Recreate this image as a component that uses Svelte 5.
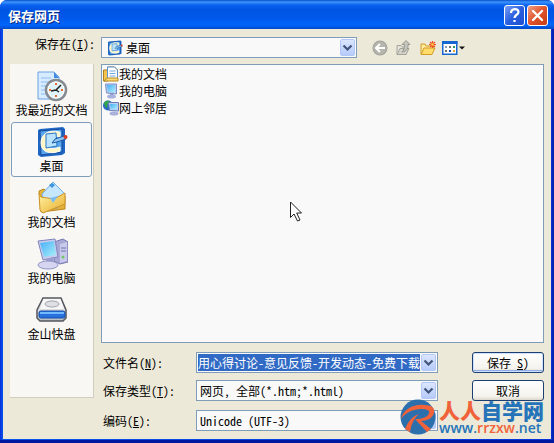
<script>
  let folder = $state('桌面');
  let fileName = $state('用心得讨论-意见反馈-开发动态-免费下载');
  let active = $state(1);
  const places = ['我最近的文档', '桌面', '我的文档', '我的电脑', '金山快盘'];
  const files = ['我的文档', '我的电脑', '网上邻居'];
</script>

{#snippet chevron()}
  <svg class="chev" viewBox="0 0 15 17" aria-hidden="true">
    <rect x=".5" y=".5" width="14" height="16" rx="1.5" fill="url(#gDrop)" stroke="#b4c8f6" />
    <path d="M3.500 6.500 7.500 10.500 11.500 6.500" fill="none" stroke="#41557c" stroke-width="2.200" />
  </svg>
{/snippet}

{#snippet deskIcon()}
  <path d="M2 4 4 3 27 1l2 2v24l-3 2-21 2-3-2Z" fill="#1e67c4" />
  <path d="M4 5 26 3v23L5 29Z" fill="#58a6ee" stroke="#174a9c" />
  <path d="M24 6C11 3 5 9 5 17c0 9 9 12 19 8v-4c-8 3-14 1-14-4 0-6 6-8 14-6Z" fill="#fff6c8" stroke="#fffdf0" />
  <path d="M10 8 20 7l1 13-11 2Z" fill="#b9e3fc" stroke="#2875c9" />
  <path d="m16 17 3-4 9-3 2 3-9 3Z" fill="#8ec6f2" stroke="#1f5aa5" />
  <circle cx="29.500" cy="11" r="2" fill="#d83c22" />
{/snippet}

{#snippet monitor()}
  <path d="m2 3 17-2 3 18-15 3Z" fill="#c9cbed" stroke="#8084bd" />
  <path d="m4 5 14-2 2 14-12 2Z" fill="url(#gScreen)" />
  <path d="m10 21 7-2 1 6-7 1Z" fill="#9a9dd0" />
  <ellipse cx="12" cy="27" rx="10" ry="4" fill="#d6d6f0" stroke="#9295c6" />
{/snippet}

<svg class="defs" aria-hidden="true">
  <defs>
    <linearGradient id="gDrop" x1="0" y1="0" x2="0" y2="1"><stop offset="0" stop-color="#dce7fe" /><stop offset="1" stop-color="#b5cafa" /></linearGradient>
    <linearGradient id="gScreen" x1="0" y1="0" x2="1" y2="1"><stop offset="0" stop-color="#49aef5" /><stop offset="1" stop-color="#a9f0fb" /></linearGradient>
    <linearGradient id="gFolder" x1="0" y1="0" x2="1" y2="1"><stop offset="0" stop-color="#fff3a5" /><stop offset="1" stop-color="#e9ad2c" /></linearGradient>
    <linearGradient id="gMetal" x1="0" y1="0" x2="0" y2="1"><stop offset="0" stop-color="#fff" /><stop offset="1" stop-color="#b9bcc4" /></linearGradient>
  </defs>
</svg>

<main class="window">
  <header>
    <h1>保存网页</h1>
    <button class="cap help" aria-label="帮助">
      <svg viewBox="0 0 19 19"><path d="M6 7c0-5 7.500-5 7.500-1 0 3-4 2.500-4 6M9.500 14v2" fill="none" stroke="#fff" stroke-width="2.200" /></svg>
    </button>
    <button class="cap close" aria-label="关闭">
      <svg viewBox="0 0 19 19"><path d="m5 5 9 9m0-9-9 9" stroke="#fff" stroke-width="2.300" stroke-linecap="round" /></svg>
    </button>
  </header>

  <div class="client">
    <div class="lookin">
      <label for="folder">保存在(<u>I</u>):</label>
      <div class="combo place">
        <svg class="small" viewBox="0 0 32 32" aria-hidden="true">{@render deskIcon()}</svg>
        <select id="folder" bind:value={folder}><option>桌面</option></select>
        {@render chevron()}
      </div>
      <div class="tools">
        <button aria-label="后退"><svg viewBox="0 0 16 16"><circle cx="8" cy="8" r="7.500" fill="#a3a29b" /><circle cx="8" cy="8" r="6.500" fill="#b5b4ad" /><path d="M13 8H4m4-4L4 8l4 4" fill="none" stroke="#fff" stroke-width="2" /></svg></button>
        <button aria-label="向上"><svg viewBox="0 0 16 16"><path d="M1 5.500h4l1 1.500h4v7.500H1Z" fill="#e4e3dc" stroke="#a5a49c" /><path d="m1 14.500 3-6h9l-3 6Z" fill="#d3d2ca" stroke="#a5a49c" /><path d="M6 4.500 10 .5l4 4h-2c.5 4-1.500 7-6 7.500 2-2 2.500-4.500 2.500-7.500Z" fill="#c4c3bc" stroke="#8b8a83" stroke-width=".8" /></svg></button>
        <button aria-label="新建文件夹"><svg viewBox="0 0 16 16"><path d="M1 14V4h4l1 2h7v3" fill="#ffeaa0" stroke="#d39c26" /><path d="M1 14.500 4 8h11l-3 6.500Z" fill="#ffdc6a" stroke="#d39c26" /><path d="M12.500 1v7M9 4.500h7M10 2l5 5m0-5-5 5" stroke="#f04b20" stroke-width="1.200" /><circle cx="12.500" cy="4.500" r="1.300" fill="#ffd04a" /></svg></button>
        <button class="view" aria-label="查看"><svg viewBox="0 0 23 16"><rect x=".75" y="1.750" width="14" height="12.500" fill="#fff" stroke="#1667cf" stroke-width="1.500" /><path d="M0 1h15.500v3H0Z" fill="#1667cf" /><path d="M3 6h2v2H3Z" fill="#8a9bb8" /><path d="M7 6h2v2H7ZM3 10h2v2H3Z" fill="#77716c" /><path d="M11 6h2v2h-2Z" fill="#2d9c57" /><path d="M7 10h2v2H7Z" fill="#193fa8" /><path d="M11 10h2v2h-2Z" fill="#e4a426" /><path d="M17 6.500h6l-3 3Z" fill="#111" /></svg></button>
      </div>
    </div>

    <div class="body">
      <nav aria-label="位置">
        {#each places as p, i}
          <button class:active={active === i} onclick={() => (active = i)}>
            <svg viewBox="0 0 32 32" aria-hidden="true">
              {#if i === 0}
                <path d="M2 2h16l5 5v22H2Z" fill="#d8ecff" stroke="#6ba2e4" />
                <path d="M18 2v6h5Z" fill="#438be0" />
                <path d="M5 8h10M5 12h12M5 16h8M5 20h7M5 24h7" stroke="#8bbcf0" />
                <circle cx="20" cy="20" r="10" fill="#dff3fb" stroke="#858b91" stroke-width="2.500" />
                <circle cx="20" cy="20" r="8" fill="none" stroke="#fff" />
                <path d="m15 21 5-1 5-5M20 20l3 2" fill="none" stroke="#222" stroke-width="1.500" />
                <path d="M20 13v2M20 25v2M13 20h2M25 20h2" stroke="#ef6b31" stroke-width="2" />
              {:else if i === 1}
                {@render deskIcon()}
              {:else if i === 2}
                <path d="M3 9 8 7l3 3 18 4v13L5 30Z" fill="#e5b13b" stroke="#bd861c" />
                <path d="m6 12 11-12 12 12-8 14H9Z" fill="#c5e6fc" stroke="#72aee2" />
                <path d="m13 3 3-2 3 2-3 3Z" fill="#3f95df" />
                <path d="M3 11 5 15 18 17l11-6v11L7 31 4 28Z" fill="url(#gFolder)" stroke="#cc942a" />
                <path d="m14 16 8-2-5 7Z" fill="#79bdf1" />
              {:else if i === 3}
                <path d="m18 4 9-3 5 3v20l-8 2-6-3Z" fill="#a7a8d5" stroke="#777ab1" />
                <path d="m24 6 7-2v19l-7 2Z" fill="#c9caeb" />
                <path d="M25 10h5M25 13h5" stroke="#7074ae" /><circle cx="27" cy="19" r="1.500" fill="#73c661" />
                {@render monitor()}
              {:else}
                <path d="M7 4h18l5 12v8l-3 3H4l-3-3v-8Z" fill="url(#gMetal)" stroke="#54575d" stroke-width="1.500" />
                <path d="M8 5h16l4 10H4Z" fill="#f7f7f8" />
                <ellipse cx="16" cy="10" rx="7" ry="3" fill="#dfe0e3" stroke="#a2a4aa" />
                <rect x="3" y="17" width="26" height="7" rx="2" fill="#2871dc" stroke="#144fac" />
                <path d="M4 18h24v2H4Z" fill="#72baff" />
              {/if}
            </svg>
            <span>{p}</span>
          </button>
        {/each}
      </nav>

      <div class="right">
        <ul>
          {#each files as f, i}
            <li>
              <svg viewBox="0 0 32 32" aria-hidden="true">
                {#if i === 0}
                  <path d="M1 8h8V2h14l6 6v16H9v6H1Z" fill="#f3c550" stroke="#ae7d1b" stroke-width="2" />
                  <path d="M9 2h14l6 6v18H9Z" fill="#fff" stroke="#5c91cf" stroke-width="2" />
                  <path d="M13 10h12M13 15h12M13 20h12" stroke="#71a7df" stroke-width="2" />
                  <path d="m2 30 7-6h21v6Z" fill="#ffdc73" stroke="#b78825" stroke-width="2" />
                {:else if i === 1}
                  <path d="M5 2h22v20L7 20Z" fill="#b9c7ec" stroke="#7c91c9" stroke-width="2" />
                  <path d="M8 4h16v15L10 17Z" fill="url(#gScreen)" />
                  <path d="M14 20h7v6h-7Z" fill="#8590c5" /><ellipse cx="17" cy="27" rx="9" ry="4" fill="#a8b1dd" />
                {:else}
                  <circle cx="10" cy="11" r="10" fill="#2869c6" /><path d="M3 4c7-5 14-1 8 3s0 6-3 8S1 9 3 4Z" fill="#36a549" />
                  <path d="M11 5h20v17l-18-1Z" fill="#bfcef1" stroke="#657cbb" stroke-width="2" /><path d="M14 8h14v11l-13-1Z" fill="url(#gScreen)" />
                  <ellipse cx="22" cy="27" rx="9" ry="4" fill="#aab2dc" />
                {/if}
              </svg>
              <span>{f}</span>
            </li>
          {/each}
        </ul>
        <form onsubmit={(e) => e.preventDefault()}>
          <div class="fields">
            <div class="field">
              <label for="name">文件名(<u>N</u>):</label>
              <div class="combo"><input id="name" bind:value={fileName} />{@render chevron()}</div>
            </div>
            <div class="field">
              <label for="type">保存类型(<u>T</u>):</label>
              <div class="combo"><select id="type"><option>网页， 全部(*.htm;*.html)</option></select>{@render chevron()}</div>
            </div>
            <div class="field last">
              <label for="enc">编码(<u>E</u>):</label>
              <div class="combo"><select id="enc"><option>Unicode (UTF-3)</option></select>{@render chevron()}</div>
            </div>
          </div>
          <div class="actions">
            <button class="default">保存 <u>S</u>)</button>
            <button type="button">取消</button>
          </div>
        </form>
      </div>
    </div>
  </div>

  <svg class="pointer" viewBox="0 0 12 21" aria-hidden="true">
    <path d="M.5 1v15.500L4 13l3.500 7 2.500-1-3.300-7H11.500Z" fill="#fff" stroke="#222" />
  </svg>

  <div class="mark">
    <svg viewBox="0 0 36 36" aria-hidden="true">
      <circle cx="18" cy="18" r="17.500" fill="#2c6fad" />
      <path d="M1 20C3 10 14 5 24 6c8 0 11 3 10 8-1 5-7 8-13 8l10 8-4 3-12-13c7 0 13-2 14-6 1-3-3-4-8-4C13 10 5 14 1 20Z" fill="#f0633a" />
      <path d="M5 30c3-7 7-13 14-15-5 4-8 11-9 18Z" fill="#f0633a" />
    </svg>
    <div class="words">
      <b><em>人人</em>自学网</b>
      <span>www.<em>rrzxw</em>.net</span>
    </div>
  </div>
</main>

<style>
  :global(body) { margin: 0; background: #fff; }
  * { box-sizing: border-box; }
  .defs { position: absolute; width: 0; height: 0; }
  .window {
    position: relative;
    min-height: 100vh;
    display: flex;
    flex-direction: column;
    padding: 0 3px 4px;
    border-radius: 7px 7px 0 0;
    background: linear-gradient(90deg, #0831d9, #0a55ee 3px, #0831d9 calc(100% - 3px), #001ea0);
    box-shadow: inset 0 -3px #0018a0;
    font: 12px/16px "Noto Sans CJK SC", sans-serif;
    font-feature-settings: "hwid";
    color: #000;
  }
  button, input, select { font: inherit; font-feature-settings: inherit; color: inherit; margin: 0; }
  header {
    display: flex;
    align-items: center;
    gap: 2px;
    height: 29px;
    margin: 0 -3px;
    padding: 2px 6px 0 8px;
    border-radius: 7px 7px 0 0;
    background: linear-gradient(#0a4fc8 0, #3c94ff 2px, #0a62ee 5px, #0054e3 10px, #0058ea 18px, #0065fb 25px, #0349c8 29px);
  }
  h1 { flex: 1; margin: 0; font-size: 13px; line-height: 20px; font-weight: 700; color: #fff; text-shadow: 1px 1px #0a2a80; }
  .cap { width: 21px; height: 21px; padding: 0; border: 1px solid #fff; border-radius: 3px; background: linear-gradient(135deg, #7c9ff5, #2a5fe0 50%, #1d4fd0); }
  .cap.close { background: linear-gradient(135deg, #f0a088, #e0532c 50%, #c63c14); }
  .cap svg { display: block; width: 19px; height: 19px; }
  .client { flex: 1; display: flex; flex-direction: column; padding: 8px 7px; background: #ece9d8; }
  .lookin { display: flex; align-items: center; height: 21px; margin-bottom: 6px; }
  .lookin label { width: 91px; padding-left: 25px; margin-top: -8px; }
  .combo { position: relative; display: flex; align-items: center; height: 21px; padding: 1px; border: 1px solid #7f9db9; background: #f9f9f9; }
  .combo select { flex: 1; min-width: 0; height: 17px; padding: 0 20px 0 2px; border: 0; background: none; appearance: none; outline: 0; line-height: 17px; }
  .combo .chev { position: absolute; right: 1px; top: 1px; width: 15px; height: 17px; pointer-events: none; }
  .place { flex: 1; }
  .combo.place select { padding-left: 3px; }
  .small { width: 16px; height: 16px; margin-left: 4px; }
  .tools { display: flex; gap: 8px; width: 187px; padding-left: 15px; }
  .tools button { width: 16px; height: 16px; padding: 0; border: 0; background: none; }
  .tools svg { display: block; width: 100%; height: 16px; }
  .tools .view { width: 23px; margin-left: -2px; }
  .body { flex: 1; display: flex; gap: 7px; }
  nav { width: 84px; height: 334px; display: flex; flex-direction: column; gap: 1px; padding: 2px 1px; background: #f8f7f3; border-right: 1px solid #d0cdbd; border-bottom: 1px solid #d0cdbd; }
  nav button { display: flex; flex-direction: column; align-items: center; height: 55px; padding: 3px 0 0; border: 1px solid transparent; border-radius: 3px; background: none; white-space: nowrap; }
  nav button.active { border-color: #7f9db9; background: #f9f9f9; }
  nav svg { width: 32px; height: 32px; }
  .right { flex: 1; min-width: 0; display: flex; flex-direction: column; }
  ul { flex: 1; margin: 0; padding: 0 1px; list-style: none; border: 1px solid #7f9db9; background: #f9f9f9; }
  li { display: flex; align-items: center; height: 17px; }
  li svg { width: 16px; height: 16px; }
  form { display: flex; justify-content: space-between; padding: 9px 0 0 2px; }
  .fields { display: flex; flex-direction: column; gap: 7px; width: 335px; }
  .field { display: flex; align-items: center; }
  .field.last { margin-top: 2px; }
  .field label { width: 93px; }
  .field .combo { flex: 1; }
  .combo input { flex: 1; min-width: 0; height: 17px; padding: 0; margin-right: 16px; border: 0; outline: 0; background: #316ac5; color: #fff; }
  .actions { display: flex; flex-direction: column; gap: 7px; width: 72px; }
  .actions button { height: 21px; padding: 0; border: 1px solid #1c4074; border-radius: 3px; background: linear-gradient(#fff, #f4f3ee 80%, #dcd7cb); line-height: 17px; white-space: nowrap; }
  .actions .default { box-shadow: inset 0 0 0 1px #cee0fb, inset 0 -2px #8fabe8; }
  .pointer { position: absolute; left: 290px; top: 201px; width: 12px; height: 21px; pointer-events: none; }
  .mark { position: absolute; right: 10px; bottom: 8px; display: flex; gap: 3px; height: 36px; color: #2573b8; pointer-events: none; }
  .mark svg { width: 36px; height: 36px; }
  .words { display: flex; flex-direction: column; width: 105px; }
  .words b { font-size: 21px; line-height: 22px; font-weight: 900; white-space: nowrap; }
  .words span { font: 600 14px/14px "Open Sans", sans-serif; }
  .words em { font-style: normal; color: #f0633a; }
</style>
